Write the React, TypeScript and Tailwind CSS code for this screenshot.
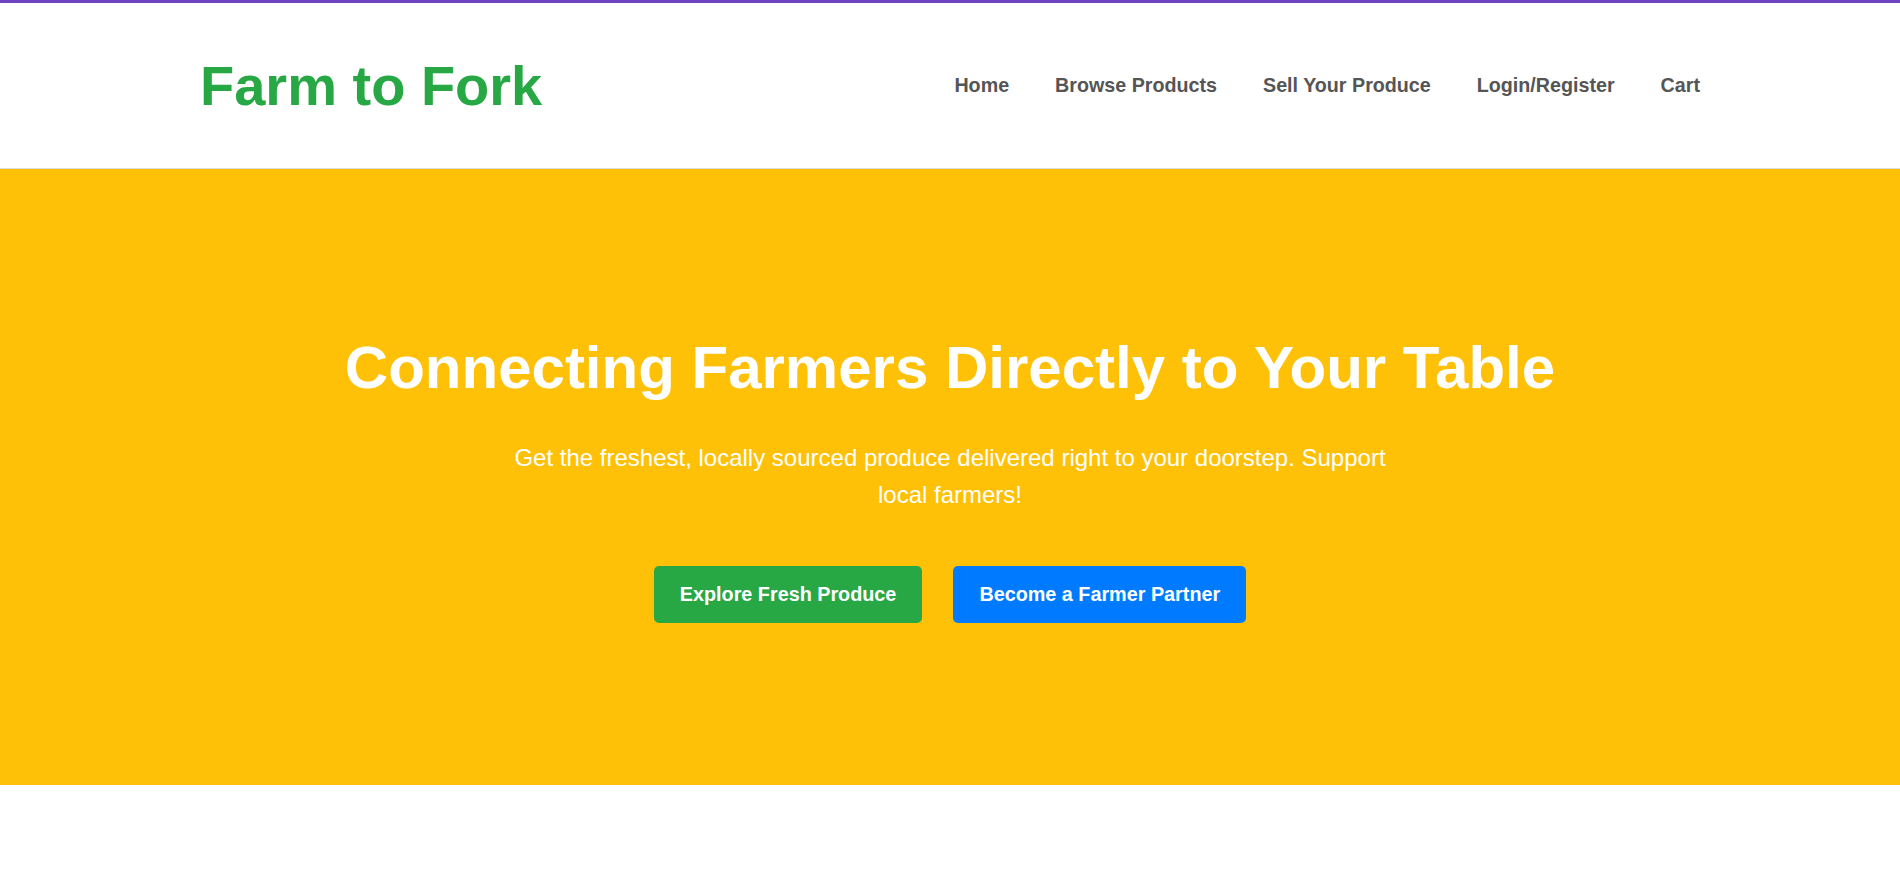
import React from 'react';

const navLinks = ['Home', 'Browse Products', 'Sell Your Produce', 'Login/Register', 'Cart'];

const App: React.FC = () => {
  return (
    <div className="min-h-screen bg-white font-['Liberation_Sans',Arial,sans-serif]">
      {/* Header */}
      <header className="h-[169px] border-t-[3px] border-b border-t-[#6f42c1] border-b-[#dddddd] bg-white">
        <div className="max-w-[1500px] h-full mx-auto flex items-center justify-between">
          <h1 className="text-[56px] font-bold text-[#28a745] leading-normal">Farm to Fork</h1>
          <nav className="flex items-center gap-[46px]">
            {navLinks.map((link) => (
              <a key={link} href="#" className="text-[19.7px] font-bold text-[#555555] leading-normal">
                {link}
              </a>
            ))}
          </nav>
        </div>
      </header>

      {/* Hero */}
      <section className="bg-[#ffc107] pt-[163px] pb-[162px] text-center text-white">
        <h2 className="text-[60px] font-bold leading-[72px] mb-[36px]">
          Connecting Farmers Directly to Your Table
        </h2>
        <p className="max-w-[900px] mx-auto text-[24px] leading-[36.6px] mb-[53px]">
          Get the freshest, locally sourced produce delivered right to your doorstep. Support local farmers!
        </p>
        <div className="flex justify-center gap-[31px]">
          <a
            href="#"
            className="h-[57px] px-[26px] flex items-center rounded-[5px] bg-[#28a745] text-[19.8px] font-bold text-white"
          >
            Explore Fresh Produce
          </a>
          <a
            href="#"
            className="h-[57px] px-[26px] flex items-center rounded-[5px] bg-[#007bff] text-[19.8px] font-bold text-white"
          >
            Become a Farmer Partner
          </a>
        </div>
      </section>
    </div>
  );
};

export default App;
